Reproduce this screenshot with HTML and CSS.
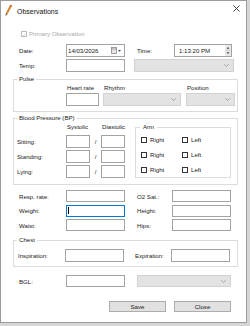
FILE: index.html
```html
<!DOCTYPE html>
<html lang="en">
<head>
    <meta charset="UTF-8">
    <meta name="viewport" content="width=device-width, initial-scale=1.0">
    <title>Observations</title>
    <link rel="stylesheet" href="styles.css">
</head>
<body>
    <div class="window">
        <div class="title-bar">
            <svg class="app-icon" width="7" height="11" viewBox="0 0 7 11">
                <polygon points="5,0 7,1 2.5,9 1,8" fill="#d9822b"/>
                <polygon points="1,8 2.5,9 0.5,11" fill="#6b3f12"/>
                <line x1="5" y1="0" x2="7" y2="1" stroke="#a0521a" stroke-width="1"/>
            </svg>
            <span class="title">Observations</span>
            <svg class="close" width="7" height="7" viewBox="0 0 7 7">
                <path d="M0.5 0.5 L6.5 6.5 M6.5 0.5 L0.5 6.5" stroke="#333" stroke-width="0.9"/>
            </svg>
        </div>

        <div class="content">
            <div class="check primary">
                <span class="box">
                    <svg width="6" height="6" viewBox="0 0 6 6"><path d="M1 3 L2.4 4.5 L5 1.3" fill="none" stroke="#b5b5b5" stroke-width="0.9"/></svg>
                </span>
                Primary Observation
            </div>

            <div class="row first">
                <span class="lbl">Date:</span>
                <div class="tb w59 date">
                    <span class="val">14/03/2026</span>
                    <svg class="cal" width="10" height="7" viewBox="0 0 10 7">
                        <rect x="0.5" y="0.5" width="5" height="6" fill="#e6e6e6" stroke="#8a8a8a" stroke-width="0.8"/>
                        <line x1="0.5" y1="2" x2="5.5" y2="2" stroke="#8a8a8a" stroke-width="0.8"/>
                        <polygon points="7,3 10,3 8.5,4.8" fill="#2a4a7a"/>
                    </svg>
                </div>
                <span class="lbl-time">Time:</span>
                <div class="tb w58 time">
                    <span class="val">1:13:20 PM</span>
                    <span class="spin">
                        <svg width="6" height="11" viewBox="0 0 6 11">
                            <rect x="0" y="0" width="6" height="11" fill="#e9e9e9"/>
                            <line x1="0" y1="5.5" x2="6" y2="5.5" stroke="#c8c8c8" stroke-width="0.6"/>
                            <polygon points="1.5,3.8 4.5,3.8 3,2" fill="#444"/>
                            <polygon points="1.5,7.2 4.5,7.2 3,9" fill="#444"/>
                        </svg>
                    </span>
                </div>
            </div>

            <div class="row second">
                <span class="lbl">Temp:</span>
                <div class="tb w59"></div>
                <div class="combo w100 temp-unit"><svg class="chev" width="5" height="3" viewBox="0 0 5 3"><path d="M0.3 0.3 L2.5 2.5 L4.7 0.3" fill="none" stroke="#8a8a8a" stroke-width="0.7"/></svg></div>
            </div>

            <fieldset class="group pulse">
                <legend>Pulse</legend>
                <div class="pulse-grid">
                    <span class="head">Heart rate</span>
                    <span class="head">Rhythm</span>
                    <span class="head">Position</span>
                    <div class="tb w33"></div>
                    <div class="combo w78"><svg class="chev" width="5" height="3" viewBox="0 0 5 3"><path d="M0.3 0.3 L2.5 2.5 L4.7 0.3" fill="none" stroke="#8a8a8a" stroke-width="0.7"/></svg></div>
                    <div class="combo w49"><svg class="chev" width="5" height="3" viewBox="0 0 5 3"><path d="M0.3 0.3 L2.5 2.5 L4.7 0.3" fill="none" stroke="#8a8a8a" stroke-width="0.7"/></svg></div>
                </div>
            </fieldset>

            <fieldset class="group bp">
                <legend>Blood Pressure (BP)</legend>
                <div class="bp-body">
                    <div class="bp-grid">
                        <span></span>
                        <span class="head">Systolic</span>
                        <span></span>
                        <span class="head">Diastolic</span>

                        <span class="lbl">Sitting:</span>
                        <div class="tb"></div>
                        <span class="slash">/</span>
                        <div class="tb"></div>

                        <span class="lbl">Standing:</span>
                        <div class="tb"></div>
                        <span class="slash">/</span>
                        <div class="tb"></div>

                        <span class="lbl">Lying:</span>
                        <div class="tb"></div>
                        <span class="slash">/</span>
                        <div class="tb"></div>
                    </div>

                    <fieldset class="group arm">
                        <legend>Arm</legend>
                        <div class="arm-grid">
                            <div class="check"><span class="box"></span>Right</div>
                            <div class="check"><span class="box"></span>Left</div>
                            <div class="check"><span class="box"></span>Right</div>
                            <div class="check"><span class="box"></span>Left</div>
                            <div class="check"><span class="box"></span>Right</div>
                            <div class="check"><span class="box"></span>Left</div>
                        </div>
                    </fieldset>
                </div>
            </fieldset>

            <div class="measures">
                <span class="lbl">Resp. rate:</span>
                <div class="tb w59"></div>
                <span class="lbl-r">O2 Sat.:</span>
                <div class="tb w59"></div>

                <span class="lbl">Weight:</span>
                <div class="tb w59 focused"><span class="caret"></span></div>
                <span class="lbl-r">Height:</span>
                <div class="tb w59"></div>

                <span class="lbl">Waist:</span>
                <div class="tb w59"></div>
                <span class="lbl-r">Hips:</span>
                <div class="tb w59"></div>
            </div>

            <fieldset class="group chest">
                <legend>Chest</legend>
                <div class="chest-row">
                    <span class="lbl">Inspiration:</span>
                    <div class="tb w59"></div>
                    <span class="lbl-exp">Expiration:</span>
                    <div class="tb w59"></div>
                </div>
            </fieldset>

            <div class="row bgl">
                <span class="lbl">BGL:</span>
                <div class="tb w59"></div>
                <div class="combo w94"><svg class="chev" width="5" height="3" viewBox="0 0 5 3"><path d="M0.3 0.3 L2.5 2.5 L4.7 0.3" fill="none" stroke="#8a8a8a" stroke-width="0.7"/></svg></div>
            </div>

            <div class="buttons">
                <div class="btn">Save</div>
                <div class="btn">Close</div>
            </div>
        </div>
    </div>
</body>
</html>
```

FILE: styles.css
```css
* {
    box-sizing: border-box;
}
body {
    margin: 0;
    background-color: #d6d6d6;
    font-family: "Liberation Sans", Arial, sans-serif;
    font-size: 6.1px;
    color: #1a1a1a;
}
.window {
    width: 247px;
    height: 323px;
    background-color: #fff;
    border: 1px solid #9c9c9c;
}
.title-bar {
    height: 20px;
    display: flex;
    align-items: center;
    padding: 0 4px;
}
.app-icon {
    margin-top: -2px;
}
.title {
    font-size: 7px;
    margin-left: 5px;
    color: #111;
}
.close {
    margin-left: auto;
    margin-right: 2px;
    margin-top: -5px;
}
.content {
    padding: 8px 0 0 12px;
}

/* checkboxes */
.check {
    display: flex;
    align-items: center;
    height: 9px;
    white-space: nowrap;
}
.box {
    width: 6px;
    height: 6px;
    border: 0.8px solid #333;
    background-color: #fff;
    margin-right: 3px;
    display: flex;
}
.primary {
    margin-left: 8px;
    color: #a8a8a8;
}
.primary .box {
    border-color: #bdbdbd;
    margin-right: 2px;
}

/* generic rows */
.row {
    display: flex;
    align-items: center;
    height: 13px;
    margin-left: 6px;
}
.row.first {
    margin-top: 6px;
}
.row.second {
    margin-top: 2px;
}
.lbl {
    width: 47px;
    white-space: nowrap;
}
.lbl-time {
    width: 37px;
    margin-left: 12px;
}
.tb {
    height: 13px;
    border: 1px solid #a3a3a3;
    background-color: #fff;
    display: flex;
    align-items: center;
}
.combo {
    height: 13px;
    border: 1px solid #d2d2d2;
    background-color: #e3e3e3;
    display: flex;
    align-items: center;
    justify-content: flex-end;
    padding-right: 4px;
}
.w59 { width: 59px; }
.w58 { width: 58px; }
.w33 { width: 33px; }
.w78 { width: 78px; }
.w49 { width: 49px; }
.w94 { width: 94px; }
.w100 { width: 100px; }
.temp-unit {
    margin-left: 9px;
}
.val {
    padding-left: 1px;
    white-space: nowrap;
}
.date .cal {
    margin-left: auto;
    margin-right: 3px;
}
.time .val {
    padding-left: 4px;
}
.spin {
    margin-left: auto;
    display: flex;
}

/* group boxes */
.group {
    margin: 0;
    border: 1px solid #dcdcdc;
    padding: 0 0 0 3px;
    min-width: 0;
}
.group legend {
    padding: 0 2px;
    line-height: 8px;
}
.pulse {
    width: 225px;
    margin-top: 3px;
    padding-bottom: 5px;
}
.pulse-grid {
    margin-left: 49px;
    display: grid;
    grid-template-columns: 37px 83px 49px;
    grid-template-rows: 10px 13px;
}
.head {
    padding-left: 1px;
    white-space: nowrap;
    line-height: 9px;
}
.bp {
    width: 225px;
    margin-top: 2px;
    padding-bottom: 6px;
}
.bp-body {
    display: flex;
    align-items: flex-start;
}
.bp-grid {
    display: grid;
    grid-template-columns: 49px 24px 11px 24px;
    grid-template-rows: 11px 13px 13px 13px;
    row-gap: 2px;
    align-items: center;
}
.bp-grid .head {
    align-self: start;
}
.slash {
    text-align: center;
}
.arm {
    width: 96px;
    margin-left: 10px;
    margin-top: 1px;
    padding: 2px 0 1px 4px;
}
.arm legend {
    padding: 0 3px;
}
.arm-grid {
    margin-left: 1px;
    display: grid;
    grid-template-columns: 41px 40px;
    grid-auto-rows: 13px;
    row-gap: 2px;
    align-items: center;
}
.arm-grid .check {
    height: 13px;
}

/* measurements */
.measures {
    margin: 5px 0 0 6px;
    display: grid;
    grid-template-columns: 47px 59px 47px 59px;
    grid-auto-rows: 12px;
    row-gap: 2.5px;
    align-items: center;
}
.measures .tb {
    height: 12px;
}
.lbl-r {
    padding-left: 12px;
    white-space: nowrap;
}
.focused {
    border-color: #0078d7;
}
.caret {
    width: 1px;
    height: 7px;
    background-color: #000;
    margin-left: 1px;
}
.chest {
    width: 225px;
    margin-top: 5px;
    padding-top: 5px;
    padding-bottom: 4px;
}
.chest-row {
    margin-left: 1px;
    display: flex;
    align-items: center;
}
.lbl-exp {
    margin-left: 11px;
    width: 36px;
    white-space: nowrap;
}
.bgl {
    margin-top: 8px;
    height: 12px;
}
.bgl .tb,
.bgl .combo {
    height: 12px;
}
.bgl .combo {
    margin-left: 12px;
}

/* buttons */
.buttons {
    display: flex;
    justify-content: flex-end;
    gap: 8px;
    margin-top: 14px;
    padding-right: 15px;
}
.btn {
    width: 57px;
    height: 11px;
    background-color: #e1e1e1;
    border: 1px solid #adadad;
    display: flex;
    align-items: center;
    justify-content: center;
}
```
